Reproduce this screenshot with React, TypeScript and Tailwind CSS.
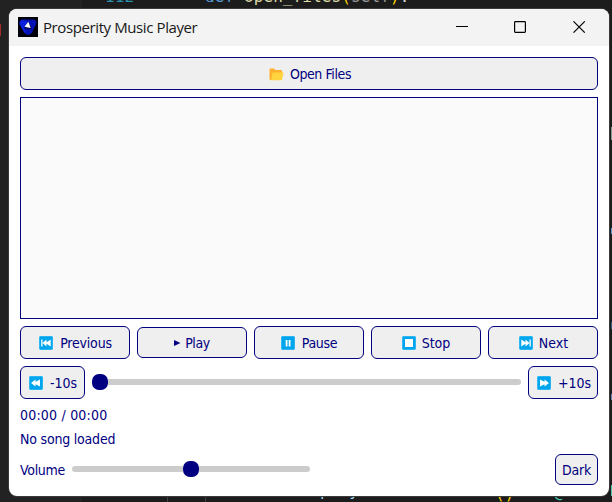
import type { ReactNode } from "react";

const btn =
  "box-border flex items-center justify-center rounded-[6px] border border-[#000080] bg-[#efefef] whitespace-nowrap";

function Emoji({ children }: { children: ReactNode }) {
  return (
    <svg width="14" height="14" viewBox="0 0 14 14" className="shrink-0">
      <rect width="14" height="14" rx="1.4" fill="#55c5f5" />
      <rect x="0.6" y="0.6" width="12.9" height="12.9" rx="1" fill="#00a6ed" />
      {children}
    </svg>
  );
}

function Folder() {
  return (
    <svg width="15" height="13" viewBox="0 0 15 13" className="mt-[2px] shrink-0">
      <path d="M0.5 1.5Q0.5 0.5 1.5 0.5H5L6.6 2H12Q13 2 13 3V12H1.5Q0.5 12 0.5 11Z" fill="#ffb02e" />
      <path d="M4.2 4.5H13.8Q14.8 4.5 14.5 5.5L13 11.3Q12.8 12.2 11.8 12.2H1.3Q2.2 12 2.5 11L3.4 5.3Q3.5 4.5 4.2 4.5Z" fill="#ffd43d" />
    </svg>
  );
}

function Logo() {
  return (
    <svg width="20" height="20" viewBox="0 0 20 20" className="shrink-0">
      <rect width="20" height="20" fill="#00000a" />
      <path d="M4 2.5H16Q19.5 4 18 7.5L13.8 16Q10 20 6.8 16L1.5 7.5Q0.5 4 4 2.5Z" fill="#0412b4" />
      <path d="M4 3L10 4.5L6 11L9 17Q6 16 4 11.5L2 7Q1 4 4 3Z" fill="#0a20dc" />
      <path d="M6 11.5L10 4.5L14 11.5L11 12.5Z" fill="#03085f" />
      <path d="M10.3 4.8L12.7 11L6.6 9.8Z" fill="#fff" />
    </svg>
  );
}

function Code({ className, children }: { className: string; children: ReactNode }) {
  return (
    <div className={"absolute whitespace-pre font-['DejaVu_Sans_Mono',monospace] text-[16px] leading-[20px] tracking-[0.1px] [font-stretch:normal] " + className}>
      {children}
    </div>
  );
}

export default function App() {
  return (
    <div className="relative h-[502px] w-[612px] overflow-hidden bg-[#1c1c1c] font-['DejaVu_Sans_Condensed','DejaVu_Sans',sans-serif] text-[14px] leading-[16px] text-[#000080] [font-stretch:condensed]">
      <div className="absolute inset-y-0 left-0 w-[82px] bg-[#222222]" />
      <div className="absolute top-[24px] left-0 h-[12px] w-px bg-[#a52a2a]" />
      <Code className="top-[-13px] left-[105px] text-[#2b91af]">112</Code>
      <Code className="top-[-13px] left-[205px] text-[#569cd6]">
        def <span className="text-[#dcdcaa]">open_files</span>
        <span className="text-[#ffd700]">(</span>
        <span className="text-[#9a9a9a]">self</span>
        <span className="text-[#ffd700]">)</span>
        <span className="text-[#d4d4d4]">:</span>
      </Code>
      <Code className="top-[481px] left-[320px] text-[#9cdcfe]">play</Code>
      <Code className="top-[484px] left-[495px] text-[#ffd700]">()</Code>
      <Code className="top-[483px] left-[554px] text-[#4ec9b0]">@</Code>
      <div className="absolute top-[127px] left-[611px] h-[13px] w-px bg-[#7e9c90]" />
      <div className="absolute top-[228px] left-[611px] h-[6px] w-px bg-[#569cd6]" />
      <div className="absolute top-[322px] left-[611px] h-[7px] w-px bg-[#315d7d]" />
      <div className="absolute top-[394px] left-[611px] h-[6px] w-px bg-[#6684b4]" />
      <div className="absolute top-[485px] left-[611px] h-[11px] w-px bg-[#4ec9b0]" />
      <div className="absolute top-[496px] left-[167px] h-[6px] w-px bg-[#404040]" />
      <div className="absolute top-[496px] left-[205px] h-[6px] w-px bg-[#404040]" />

      <div className="absolute top-[9px] left-[9px] flex h-[487px] w-[600px] flex-col overflow-hidden rounded-[8px] bg-white shadow-[0_0_0_1px_#3a3a3a]">
        <header className="flex h-[37px] shrink-0 items-center bg-[#f3f3f3] pb-px pl-[9px]">
          <Logo />
          <span className="ml-[5px] font-['Open_Sans',sans-serif] text-[15px] leading-[20px] tracking-[-0.4px] whitespace-nowrap text-[#191919] [font-stretch:normal]">
            Prosperity Music Player
          </span>
          <div className="mr-[23px] ml-auto flex items-center gap-[46px] text-black">
            <svg width="12" height="12" viewBox="0 0 12 12"><path d="M0 5.5H12" stroke="currentColor" /></svg>
            <svg width="12" height="12" viewBox="0 0 12 12"><rect x="0.6" y="0.6" width="10.8" height="10.8" rx="0.8" fill="none" stroke="currentColor" strokeWidth="1.2" /></svg>
            <svg width="14" height="12" viewBox="0 0 14 12"><path d="M1.5 0.3L12.8 11.7M12.8 0.3L1.5 11.7" stroke="currentColor" strokeWidth="1.1" /></svg>
          </div>
        </header>

        <main className="flex flex-1 flex-col px-[11px] pt-[11px]">
          <button className={btn + " h-[33px] gap-[6px] pl-[2px]"}>
            <Folder /><span className="tracking-[-0.4px]">Open Files</span>
          </button>
          <div className="mt-[7px] h-[222px] border border-[#000080] bg-[#fafafa]" />

          <div className="mt-[7px] flex h-[33px] items-center gap-[7px]">
            <button className={btn + " h-[33px] w-[110px] gap-[7px] pl-[1px]"}>
              <Emoji><path d="M2.2 3.5H3.5V10.5H2.2ZM3.5 7L7.5 3.5V6.2L11.7 3.5V10.5L7.5 7.8V10.5Z" fill="#fff" /></Emoji>
              <span className="tracking-[-0.2px]">Previous</span>
            </button>
            <button className={btn + " h-[31px] w-[110px] gap-[4px]"}>
              <svg width="7" height="6" viewBox="0 0 7 6"><path d="M0 0L6.5 3L0 6Z" fill="#000080" /></svg>
              <span className="tracking-[-0.4px]">Play</span>
            </button>
            <button className={btn + " h-[33px] w-[110px] gap-[7px]"}>
              <Emoji><path d="M4.7 4H6.5V10.5H4.7ZM7.7 4H9.5V10.5H7.7Z" fill="#fff" /></Emoji>
              <span className="tracking-[-0.3px]">Pause</span>
            </button>
            <button className={btn + " h-[33px] w-[110px] gap-[6px]"}>
              <Emoji><rect x="3" y="3" width="8" height="8" fill="#fff" /></Emoji>
              <span>Stop</span>
            </button>
            <button className={btn + " h-[33px] w-[110px] gap-[6px] pl-[1px]"}>
              <Emoji><path d="M11.8 3.5H10.5V10.5H11.8ZM10.5 7L6.5 3.5V6.2L2.3 3.5V10.5L6.5 7.8V10.5Z" fill="#fff" /></Emoji>
              <span>Next</span>
            </button>
          </div>

          <div className="mt-[7px] flex h-[33px] items-center gap-[7px]">
            <button className={btn + " h-[33px] w-[65px] gap-[7px] pl-[1px]"}>
              <Emoji><path d="M2 7L6.5 3.5V5.8L11 3.5V10.5L6.5 8.2V10.5Z" fill="#fff" /></Emoji>
              <span>-10s</span>
            </button>
            <div className="mb-[2px] flex h-[16px] flex-1 items-center">
              <div className="size-[16px] rounded-[7px] bg-[#000080]" />
              <div className="h-[6px] flex-1 rounded-r-[3px] bg-[#cccccc]" />
            </div>
            <button className={btn + " h-[33px] w-[70px] gap-[7px] pl-[2px]"}>
              <Emoji><path d="M12 7L7.5 3.5V5.8L3 3.5V10.5L7.5 8.2V10.5Z" fill="#fff" /></Emoji>
              <span>+10s</span>
            </button>
          </div>

          <div className="mt-[8px] h-[16px] tracking-[0.2px]">00:00 / 00:00</div>
          <div className="mt-[8px] h-[16px] tracking-[-0.2px]">No song loaded</div>
          <div className="mt-[7px] flex h-[31px] items-center">
            <span className="w-[52px] tracking-[-0.3px] whitespace-nowrap">Volume</span>
            <div className="mb-[2px] flex h-[16px] w-[238px] items-center">
              <div className="h-[6px] w-[111px] rounded-l-[3px] bg-[#cccccc]" />
              <div className="size-[16px] rounded-[7px] bg-[#000080]" />
              <div className="h-[6px] flex-1 rounded-r-[3px] bg-[#cccccc]" />
            </div>
            <button className={btn + " ml-auto h-[31px] w-[43px] tracking-[-0.2px]"}>Dark</button>
          </div>
        </main>
      </div>
    </div>
  );
}
